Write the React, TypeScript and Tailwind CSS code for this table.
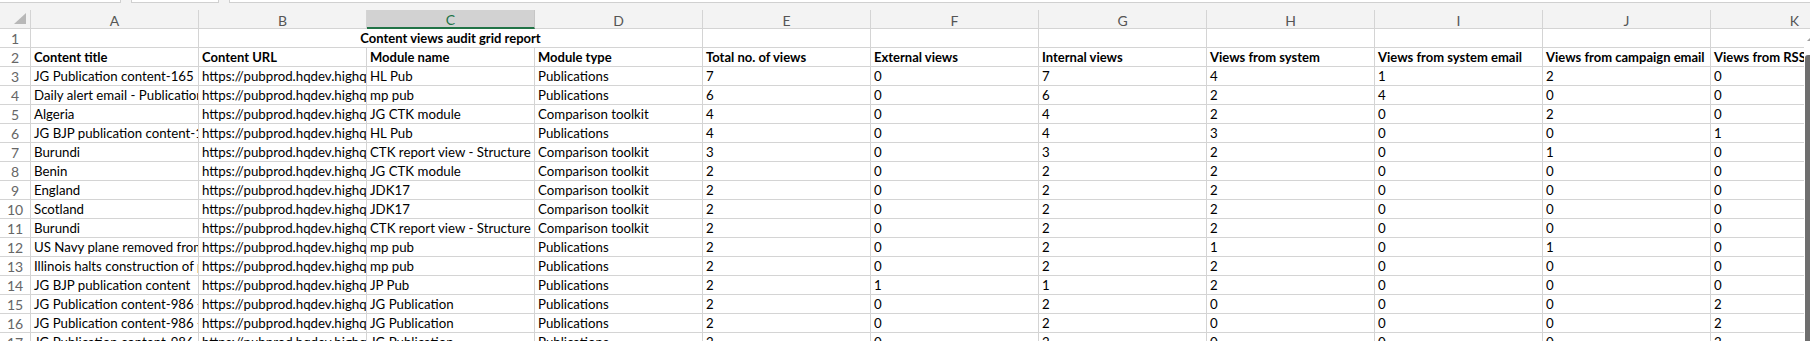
import React from 'react';

const COLS = ['A', 'B', 'C', 'D', 'E', 'F', 'G', 'H', 'I', 'J', 'K'];
const URL = 'https://pubprod.hqdev.highq.com/pubprod/content/view';

const HEAD = [
  'Content title',
  'Content URL',
  'Module name',
  'Module type',
  'Total no. of views',
  'External views',
  'Internal views',
  'Views from system',
  'Views from system email',
  'Views from campaign email',
  'Views from RSS',
];

const DATA: string[][] = [
  ['JG Publication content-165', URL, 'HL Pub', 'Publications', '7', '0', '7', '4', '1', '2', '0'],
  ['Daily alert email - Publications content', URL, 'mp pub', 'Publications', '6', '0', '6', '2', '4', '0', '0'],
  ['Algeria', URL, 'JG CTK module', 'Comparison toolkit', '4', '0', '4', '2', '0', '2', '0'],
  ['JG BJP publication content-1 test', URL, 'HL Pub', 'Publications', '4', '0', '4', '3', '0', '0', '1'],
  ['Burundi', URL, 'CTK report view - Structure', 'Comparison toolkit', '3', '0', '3', '2', '0', '1', '0'],
  ['Benin', URL, 'JG CTK module', 'Comparison toolkit', '2', '0', '2', '2', '0', '0', '0'],
  ['England', URL, 'JDK17', 'Comparison toolkit', '2', '0', '2', '2', '0', '0', '0'],
  ['Scotland', URL, 'JDK17', 'Comparison toolkit', '2', '0', '2', '2', '0', '0', '0'],
  ['Burundi', URL, 'CTK report view - Structure', 'Comparison toolkit', '2', '0', '2', '2', '0', '0', '0'],
  ['US Navy plane removed from runway', URL, 'mp pub', 'Publications', '2', '0', '2', '1', '0', '1', '0'],
  ['Illinois halts construction of pipeline', URL, 'mp pub', 'Publications', '2', '0', '2', '2', '0', '0', '0'],
  ['JG BJP publication content', URL, 'JP Pub', 'Publications', '2', '1', '1', '2', '0', '0', '0'],
  ['JG Publication content-986 - copy', URL, 'JG Publication', 'Publications', '2', '0', '2', '0', '0', '0', '2'],
  ['JG Publication content-986 - copy', URL, 'JG Publication', 'Publications', '2', '0', '2', '0', '0', '0', '2'],
  ['JG Publication content-986 - copy', URL, 'JG Publication', 'Publications', '2', '0', '2', '0', '0', '0', '2'],
];

function Cell({ text, bold }: { text: string; bold?: boolean }) {
  return (
    <div
      className={`w-[168px] shrink-0 h-full border-r border-[#d4d4d4] overflow-hidden whitespace-nowrap pl-[3px] leading-[19px] text-black ${
        bold ? 'font-bold text-[13px]' : 'text-[13.25px]'
      }`}
    >
      {text}
    </div>
  );
}

function RowHead({ n }: { n: number }) {
  return (
    <div className="w-[31px] shrink-0 h-full border-r border-[#d4d4d4] flex items-center justify-center text-[#666666] text-[14px] leading-[18px] pt-[1px]">
      {n}
    </div>
  );
}

export default function App() {
  return (
    <div
      className="w-[1810px] h-[341px] overflow-hidden bg-white flex flex-col text-[13px]"
      style={{ fontFamily: 'Lato, "Open Sans", sans-serif' }}
    >
      {/* top strip (bottom of formula bar) */}
      <div className="h-[10px] shrink-0 bg-[#f3f3f3] flex items-start gap-[10px]">
        <div className="w-[121px] h-[3px] bg-white border-b border-r border-[#d0d0d0]" />
        <div className="w-[88px] h-[3px] bg-white border-b border-x border-[#d0d0d0]" />
        <div className="flex-1 h-[3px] bg-white border-b border-l border-[#d0d0d0]" />
      </div>

      {/* column header row */}
      <div className="h-[19px] shrink-0 flex bg-[#f3f3f3] overflow-hidden">
        <div className="w-[31px] shrink-0 h-full border-r border-b border-[#d4d4d4] relative">
          <svg width="31" height="18" className="absolute left-0 top-0">
            <polygon points="26,3 26,14 14,14" fill="#b8b8b8" />
          </svg>
        </div>
        {COLS.map((c) =>
          c === 'C' ? (
            <div
              key={c}
              className="w-[168px] shrink-0 h-full bg-[#d2d2d2] border-r border-[#c6c6c6] border-b-2 border-b-[#217346] flex items-center justify-center text-[#217346] text-[14px] pt-[2px]"
            >
              {c}
            </div>
          ) : (
            <div
              key={c}
              className="w-[168px] shrink-0 h-full border-r border-b border-[#d4d4d4] flex items-center justify-center text-[#555555] text-[14px] pt-[3px]"
            >
              {c}
            </div>
          )
        )}
        <div className="flex-1 h-full border-b border-[#d4d4d4]" />
      </div>

      {/* body */}
      <div className="flex flex-1 min-h-0">
        <div className="w-[1804px] shrink-0 overflow-hidden flex flex-col">
          {/* row 1 */}
          <div className="h-[19px] shrink-0 flex border-b border-[#d4d4d4]">
            <RowHead n={1} />
            <Cell text="" />
            <div className="w-[504px] shrink-0 h-full border-r border-[#d4d4d4] text-center font-bold text-[13px] leading-[19px] text-black whitespace-nowrap">
              Content views audit grid report
            </div>
            {COLS.slice(4).map((c) => (
              <Cell key={c} text="" />
            ))}
          </div>
          {/* row 2 headers */}
          <div className="h-[19px] shrink-0 flex border-b border-[#d4d4d4]">
            <RowHead n={2} />
            {HEAD.map((h, i) => (
              <Cell key={i} text={h} bold />
            ))}
          </div>
          {DATA.map((r, ri) => (
            <div key={ri} className="h-[19px] shrink-0 flex border-b border-[#d4d4d4]">
              <RowHead n={ri + 3} />
              {r.map((v, ci) => (
                <Cell key={ci} text={v} />
              ))}
            </div>
          ))}
        </div>

        {/* vertical scrollbar */}
        <div className="w-[6px] shrink-0 bg-white flex flex-col items-end">
          <svg width="6" height="18" className="shrink-0">
            <polygon points="3,12 6,12 6,9" fill="#a0a0a0" />
          </svg>
          <div className="w-[5px] mt-[8px] flex-1 bg-[#6e6e6e] rounded-tl-[3px]" />
        </div>
      </div>
    </div>
  );
}
